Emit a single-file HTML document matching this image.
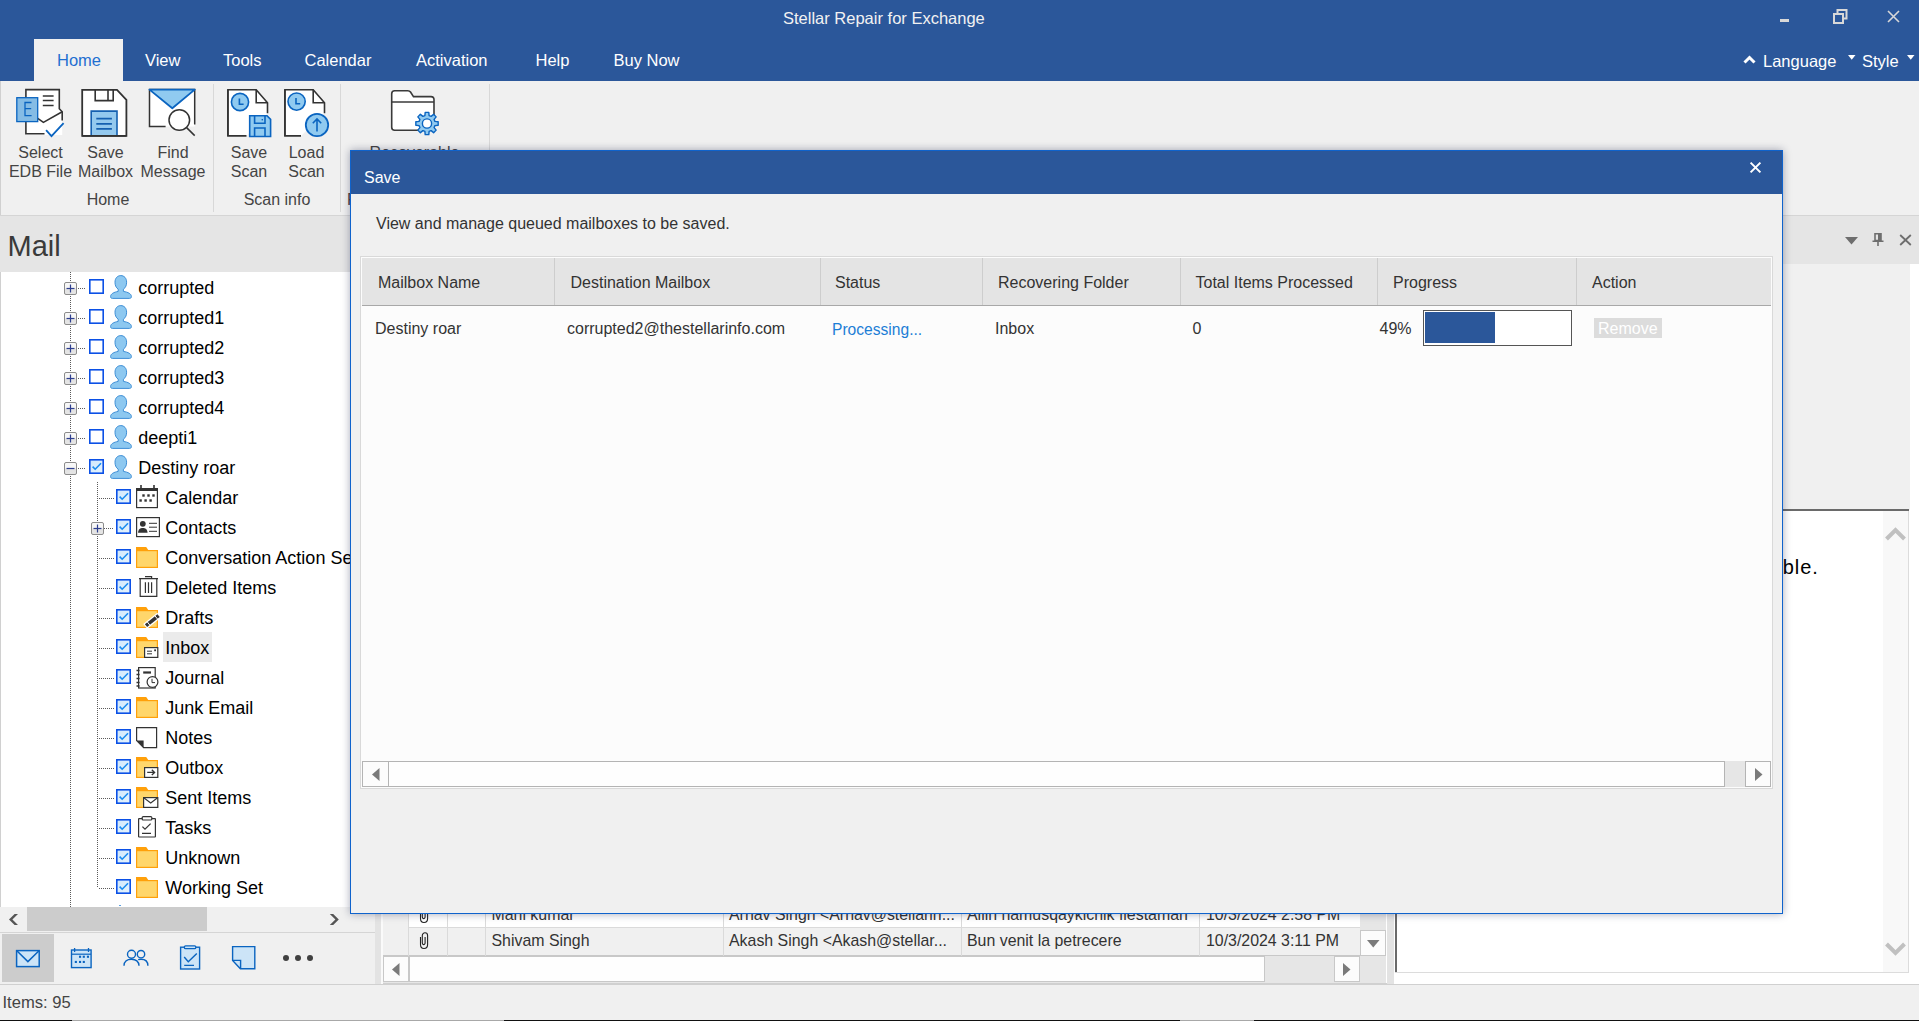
<!DOCTYPE html><html><head><meta charset="utf-8"><style>
html,body{margin:0;padding:0;}
body{width:1919px;height:1021px;position:relative;overflow:hidden;background:#F0F0F0;font-family:"Liberation Sans",sans-serif;}
.a{position:absolute;}
.t{position:absolute;white-space:pre;line-height:1;}
svg.a{overflow:visible;}
</style></head><body>
<svg width="0" height="0" style="position:absolute"><defs><linearGradient id="expg" x1="0" y1="0" x2="0" y2="1"><stop offset="0" stop-color="#FAFAFA"/><stop offset="0.45" stop-color="#F4F4F4"/><stop offset="0.55" stop-color="#E2E2E2"/><stop offset="1" stop-color="#E6E6E6"/></linearGradient><linearGradient id="cbg" x1="0" y1="0" x2="1" y2="1"><stop offset="0" stop-color="#CFE8FC"/><stop offset="1" stop-color="#E6F3FD"/></linearGradient></defs></svg>
<div class="a" style="left:0px;top:0px;width:1919px;height:81px;background:#2B579A"></div>
<div class="t" style="left:783.0px;top:10.0px;font-size:16.5px;color:#F2F2F2;">Stellar Repair for Exchange</div>
<div class="a" style="left:1780px;top:19px;width:9px;height:3px;background:#D8D8D8"></div>
<svg class="a" style="left:1833px;top:9px;" width="15" height="15" viewBox="0 0 15 15"><path d="M4.5 4.5V1h9v8.5H10" fill="none" stroke="#D8D8D8" stroke-width="2"/><rect x="1" y="5" width="9" height="9" fill="none" stroke="#D8D8D8" stroke-width="2"/></svg>
<svg class="a" style="left:1887px;top:10px;" width="13" height="13" viewBox="0 0 13 13"><path d="M1 1L12 12M12 1L1 12" stroke="#D8D8D8" stroke-width="1.6"/></svg>
<div class="a" style="left:34px;top:39px;width:89px;height:42px;background:#F0F0F0"></div>
<div class="t" style="left:57.0px;top:52.0px;font-size:16.5px;color:#1F6FD1;">Home</div>
<div class="t" style="left:145.0px;top:52.0px;font-size:16.5px;color:#FFFFFF;">View</div>
<div class="t" style="left:223.0px;top:52.0px;font-size:16.5px;color:#FFFFFF;">Tools</div>
<div class="t" style="left:304.5px;top:52.0px;font-size:16.5px;color:#FFFFFF;">Calendar</div>
<div class="t" style="left:416.0px;top:52.0px;font-size:16.5px;color:#FFFFFF;">Activation</div>
<div class="t" style="left:535.5px;top:52.0px;font-size:16.5px;color:#FFFFFF;">Help</div>
<div class="t" style="left:613.5px;top:52.0px;font-size:16.5px;color:#FFFFFF;">Buy Now</div>
<svg class="a" style="left:1743px;top:54px;" width="13" height="10" viewBox="0 0 13 10"><path d="M1.5 8.5L6.5 3.5L11.5 8.5" fill="none" stroke="#fff" stroke-width="3"/></svg>
<div class="t" style="left:1763.0px;top:53.0px;font-size:16.5px;color:#FFFFFF;">Language</div>
<svg class="a" style="left:1848px;top:55px;" width="8" height="5" viewBox="0 0 8 5"><path d="M0 0H7.5L3.75 4.8Z" fill="#fff"/></svg>
<div class="t" style="left:1862.0px;top:53.0px;font-size:16.5px;color:#FFFFFF;">Style</div>
<svg class="a" style="left:1907px;top:55px;" width="8" height="5" viewBox="0 0 8 5"><path d="M0 0H7.5L3.75 4.8Z" fill="#fff"/></svg>
<div class="a" style="left:0px;top:81px;width:1919px;height:134px;background:#F0F0F0"></div>
<div class="a" style="left:0px;top:81px;width:1px;height:134px;background:#D0D0D0"></div>
<div class="a" style="left:0px;top:215px;width:1919px;height:1px;background:#D5D5D5"></div>
<div class="a" style="left:213px;top:84px;width:1px;height:128px;background:#D8D8D8"></div>
<div class="a" style="left:340px;top:84px;width:1px;height:128px;background:#D8D8D8"></div>
<div class="a" style="left:489px;top:84px;width:1px;height:128px;background:#D8D8D8"></div>
<svg class="a" style="left:10px;top:85px;" width="60" height="55" viewBox="0 0 60 55"><path d="M15.9 4.6H49.3V23.7L52.2 26.7V50H15.9Z" fill="#fff"/><path d="M34.5 48.7H15.9V4.6H49.3V23.7L52.2 26.7V35.5" fill="none" stroke="#333" stroke-width="1.6"/><path d="M27.7 33.4L33.4 37.4L52.2 26.7" fill="none" stroke="#333" stroke-width="1.6"/><path d="M32.8 11H43.6M32.8 15.6H43.6M32.8 20.4H43.6" stroke="#333" stroke-width="1.5"/><rect x="6.8" y="12.7" width="20.9" height="23.9" fill="#85BCE5" stroke="#0A64C0" stroke-width="1.3"/><path d="M21.5 17.5H15V30.6H21.6M15 23.6H21.2" fill="none" stroke="#0A64C0" stroke-width="1.3"/><path d="M36.1 45.2L41.5 51.2L53.6 38.2" fill="none" stroke="#0A64C0" stroke-width="1.8"/></svg>
<svg class="a" style="left:75px;top:85px;" width="60" height="55" viewBox="0 0 60 55"><path d="M7.2 4.8H42L51.4 14.8V50.9H7.2Z" fill="#fff" stroke="#333" stroke-width="1.8"/><path d="M20.2 4.8V15.6H38.2V4.8M33 4.8V15.6" fill="none" stroke="#333" stroke-width="1.6"/><path d="M16.2 50.9V26.1H42V50.9" fill="#94C9EE" stroke="#1560B0" stroke-width="1.6"/><path d="M21.3 33.7H36.9M21.3 38.9H36.9M21.3 43.9H36.9" stroke="#1560B0" stroke-width="1.8"/><path d="M7.2 50.9H51.4" stroke="#333" stroke-width="1.8"/></svg>
<svg class="a" style="left:143px;top:85px;" width="60" height="55" viewBox="0 0 60 55"><path d="M6.5 4.6H51.7V39.6" fill="#fff"/><rect x="6.5" y="4.6" width="45.2" height="36.9" fill="#fff"/><path d="M22.6 41.5H6.5V4.6H51.7V39.6" fill="none" stroke="#333" stroke-width="1.5"/><path d="M6.5 4.6L29.3 23.2L51.7 4.6Z" fill="#90CAF0" stroke="#0A64C0" stroke-width="1.8" stroke-linejoin="round"/><circle cx="36.3" cy="35" r="10.3" fill="#fff" stroke="#333" stroke-width="1.5"/><path d="M43.6 42.6L51.7 50.6" stroke="#333" stroke-width="1.5"/></svg>
<svg class="a" style="left:222px;top:85px;" width="60" height="55" viewBox="0 0 60 55"><path d="M24.5 50.9H5.9V4.8H34.2L45.5 17.8V28.3" fill="#fff" stroke="#333" stroke-width="1.6"/><path d="M34.2 4.8V17.8H45.5" fill="none" stroke="#333" stroke-width="1.6"/><path d="M5.9 4.8V50.9" stroke="#333" stroke-width="1.6"/><circle cx="18" cy="17" r="8.6" fill="#90CAF0" stroke="#0A64C0" stroke-width="1.6"/><path d="M17.4 13.4V19.2H21.6" fill="none" stroke="#0A64C0" stroke-width="1.6"/><path d="M27.7 30.8H45L48.6 34.4V51.5H27.7Z" fill="#90CAF0" stroke="#0A64C0" stroke-width="1.6"/><path d="M32.6 31V38.3H43V31M32.6 51.3V43H43V51.3" fill="none" stroke="#0A64C0" stroke-width="1.6"/><rect x="39.6" y="34" width="1.4" height="1.4" fill="#0A64C0"/></svg>
<svg class="a" style="left:279px;top:85px;" width="60" height="55" viewBox="0 0 60 55"><path d="M22 50.9H5.9V4.8H34.2L45.5 17.8V28.3" fill="#fff" stroke="#333" stroke-width="1.6"/><path d="M34.2 4.8V17.8H45.5" fill="none" stroke="#333" stroke-width="1.6"/><path d="M5.9 4.8V50.9" stroke="#333" stroke-width="1.6"/><circle cx="17.6" cy="16.6" r="8.6" fill="#90CAF0" stroke="#0A64C0" stroke-width="1.6"/><path d="M17 13V18.8H21.2" fill="none" stroke="#0A64C0" stroke-width="1.6"/><circle cx="38" cy="40" r="11.2" fill="#90CAF0" stroke="#0A64C0" stroke-width="1.8"/><path d="M38 46.5V34M33.8 38.2L38 34L42.2 38.2" fill="none" stroke="#0A64C0" stroke-width="1.6"/></svg>
<svg class="a" style="left:385px;top:85px;" width="60" height="55" viewBox="0 0 60 55"><path d="M6.7 9V42.2Q6.7 45.2 9.7 45.2H45.8Q49 45.2 49 42.2V14.6Q49 11.6 46 11.6H28.5L25.5 7Q24.6 5.7 22.8 5.7H9.7Q6.7 5.7 6.7 8.7Z" fill="#fff" stroke="#3A3A3A" stroke-width="1.6"/><path d="M6.7 17H49" stroke="#3A3A3A" stroke-width="1.6"/><g transform="translate(42,38.5)"><path d="M-2.11 -7.92L-1.80 -11.16L1.80 -11.16L2.11 -7.92L4.11 -7.09L6.62 -9.16L9.16 -6.62L7.09 -4.11L7.92 -2.11L11.16 -1.80L11.16 1.80L7.92 2.11L7.09 4.11L9.16 6.62L6.62 9.16L4.11 7.09L2.11 7.92L1.80 11.16L-1.80 11.16L-2.11 7.92L-4.11 7.09L-6.62 9.16L-9.16 6.62L-7.09 4.11L-7.92 2.11L-11.16 1.80L-11.16 -1.80L-7.92 -2.11L-7.09 -4.11L-9.16 -6.62L-6.62 -9.16L-4.11 -7.09Z" fill="#90CAF0" stroke="#0A64C0" stroke-width="1.4" stroke-linejoin="round"/><circle r="4.6" fill="#fff" stroke="#0A64C0" stroke-width="1.4"/></g></svg>
<div class="t" style="left:-109.5px;width:300px;text-align:center;top:145.4px;font-size:16px;color:#444444">Select</div>
<div class="t" style="left:-109.5px;width:300px;text-align:center;top:164.4px;font-size:16px;color:#444444">EDB File</div>
<div class="t" style="left:-44.5px;width:300px;text-align:center;top:145.4px;font-size:16px;color:#444444">Save</div>
<div class="t" style="left:-44.5px;width:300px;text-align:center;top:164.4px;font-size:16px;color:#444444">Mailbox</div>
<div class="t" style="left:23px;width:300px;text-align:center;top:145.4px;font-size:16px;color:#444444">Find</div>
<div class="t" style="left:23px;width:300px;text-align:center;top:164.4px;font-size:16px;color:#444444">Message</div>
<div class="t" style="left:-42px;width:300px;text-align:center;top:192.4px;font-size:16px;color:#444444">Home</div>
<div class="t" style="left:99px;width:300px;text-align:center;top:145.4px;font-size:16px;color:#444444">Save</div>
<div class="t" style="left:99px;width:300px;text-align:center;top:164.4px;font-size:16px;color:#444444">Scan</div>
<div class="t" style="left:156.5px;width:300px;text-align:center;top:145.4px;font-size:16px;color:#444444">Load</div>
<div class="t" style="left:156.5px;width:300px;text-align:center;top:164.4px;font-size:16px;color:#444444">Scan</div>
<div class="t" style="left:127px;width:300px;text-align:center;top:192.4px;font-size:16px;color:#444444">Scan info</div>
<div class="t" style="left:264.5px;width:300px;text-align:center;top:145.4px;font-size:16px;color:#444444">Recoverable</div>
<div class="t" style="left:347.0px;top:192.4px;font-size:16px;color:#444444;">F</div>
<div class="a" style="left:0px;top:216px;width:380px;height:56px;background:#E5E5E5"></div>
<div class="t" style="left:7.5px;top:231.8px;font-size:29px;color:#3A3A3A;">Mail</div>
<div class="a" style="left:0px;top:272px;width:375px;height:635px;background:#FFFFFF"></div>
<div class="a" style="left:0px;top:272px;width:1px;height:635px;background:#D0D0D0"></div>
<div class="a" style="left:70px;top:272px;width:1px;height:635px;background:repeating-linear-gradient(to bottom,#5A5A5A 0,#5A5A5A 1px,transparent 1px,transparent 2px)"></div>
<svg class="a" style="left:64px;top:282px;" width="13" height="13" viewBox="0 0 13 13"><rect x="0.5" y="0.5" width="12" height="12" rx="1.5" fill="url(#expg)" stroke="#8C8C8C" stroke-width="1"/><path d="M2.5 6.5H10.5" stroke="#2E3F8F" stroke-width="1.2"/><path d="M6.5 2.5V10.5" stroke="#2E3F8F" stroke-width="1.2"/></svg>
<div class="a" style="left:78px;top:288px;width:8px;height:1px;background:repeating-linear-gradient(to right,#5A5A5A 0,#5A5A5A 1px,transparent 1px,transparent 2px)"></div>
<svg class="a" style="left:89px;top:279px;" width="15" height="15" viewBox="0 0 15 15"><rect x="0.8" y="0.8" width="13.4" height="13.4" fill="#FFFFFF" stroke="#0B50E6" stroke-width="1.6"/></svg>
<svg class="a" style="left:110px;top:275px;" width="22" height="24" viewBox="0 0 22 24"><path d="M8.2 14.2C5.8 12.6 5 10 5 7.2C5 3.2 7.4 0.6 10.8 0.6C14.2 0.6 16.6 3.2 16.6 7.2C16.6 10 15.8 12.6 13.4 14.2V16.4C18.2 17.2 21.4 18.8 21.4 21.6C21.4 23 20.6 23.4 19.4 23.4H2.6C1.2 23.4 0.6 23 0.6 21.6C0.6 18.8 3.8 17.2 8.2 16.4Z" fill="#8DC8F0" stroke="#3F8FD6" stroke-width="1"/></svg>
<div class="t" style="left:138.3px;top:278.9px;font-size:18px;color:#000;">corrupted</div>
<svg class="a" style="left:64px;top:312px;" width="13" height="13" viewBox="0 0 13 13"><rect x="0.5" y="0.5" width="12" height="12" rx="1.5" fill="url(#expg)" stroke="#8C8C8C" stroke-width="1"/><path d="M2.5 6.5H10.5" stroke="#2E3F8F" stroke-width="1.2"/><path d="M6.5 2.5V10.5" stroke="#2E3F8F" stroke-width="1.2"/></svg>
<div class="a" style="left:78px;top:318px;width:8px;height:1px;background:repeating-linear-gradient(to right,#5A5A5A 0,#5A5A5A 1px,transparent 1px,transparent 2px)"></div>
<svg class="a" style="left:89px;top:309px;" width="15" height="15" viewBox="0 0 15 15"><rect x="0.8" y="0.8" width="13.4" height="13.4" fill="#FFFFFF" stroke="#0B50E6" stroke-width="1.6"/></svg>
<svg class="a" style="left:110px;top:305px;" width="22" height="24" viewBox="0 0 22 24"><path d="M8.2 14.2C5.8 12.6 5 10 5 7.2C5 3.2 7.4 0.6 10.8 0.6C14.2 0.6 16.6 3.2 16.6 7.2C16.6 10 15.8 12.6 13.4 14.2V16.4C18.2 17.2 21.4 18.8 21.4 21.6C21.4 23 20.6 23.4 19.4 23.4H2.6C1.2 23.4 0.6 23 0.6 21.6C0.6 18.8 3.8 17.2 8.2 16.4Z" fill="#8DC8F0" stroke="#3F8FD6" stroke-width="1"/></svg>
<div class="t" style="left:138.3px;top:308.9px;font-size:18px;color:#000;">corrupted1</div>
<svg class="a" style="left:64px;top:342px;" width="13" height="13" viewBox="0 0 13 13"><rect x="0.5" y="0.5" width="12" height="12" rx="1.5" fill="url(#expg)" stroke="#8C8C8C" stroke-width="1"/><path d="M2.5 6.5H10.5" stroke="#2E3F8F" stroke-width="1.2"/><path d="M6.5 2.5V10.5" stroke="#2E3F8F" stroke-width="1.2"/></svg>
<div class="a" style="left:78px;top:348px;width:8px;height:1px;background:repeating-linear-gradient(to right,#5A5A5A 0,#5A5A5A 1px,transparent 1px,transparent 2px)"></div>
<svg class="a" style="left:89px;top:339px;" width="15" height="15" viewBox="0 0 15 15"><rect x="0.8" y="0.8" width="13.4" height="13.4" fill="#FFFFFF" stroke="#0B50E6" stroke-width="1.6"/></svg>
<svg class="a" style="left:110px;top:335px;" width="22" height="24" viewBox="0 0 22 24"><path d="M8.2 14.2C5.8 12.6 5 10 5 7.2C5 3.2 7.4 0.6 10.8 0.6C14.2 0.6 16.6 3.2 16.6 7.2C16.6 10 15.8 12.6 13.4 14.2V16.4C18.2 17.2 21.4 18.8 21.4 21.6C21.4 23 20.6 23.4 19.4 23.4H2.6C1.2 23.4 0.6 23 0.6 21.6C0.6 18.8 3.8 17.2 8.2 16.4Z" fill="#8DC8F0" stroke="#3F8FD6" stroke-width="1"/></svg>
<div class="t" style="left:138.3px;top:338.9px;font-size:18px;color:#000;">corrupted2</div>
<svg class="a" style="left:64px;top:372px;" width="13" height="13" viewBox="0 0 13 13"><rect x="0.5" y="0.5" width="12" height="12" rx="1.5" fill="url(#expg)" stroke="#8C8C8C" stroke-width="1"/><path d="M2.5 6.5H10.5" stroke="#2E3F8F" stroke-width="1.2"/><path d="M6.5 2.5V10.5" stroke="#2E3F8F" stroke-width="1.2"/></svg>
<div class="a" style="left:78px;top:378px;width:8px;height:1px;background:repeating-linear-gradient(to right,#5A5A5A 0,#5A5A5A 1px,transparent 1px,transparent 2px)"></div>
<svg class="a" style="left:89px;top:369px;" width="15" height="15" viewBox="0 0 15 15"><rect x="0.8" y="0.8" width="13.4" height="13.4" fill="#FFFFFF" stroke="#0B50E6" stroke-width="1.6"/></svg>
<svg class="a" style="left:110px;top:365px;" width="22" height="24" viewBox="0 0 22 24"><path d="M8.2 14.2C5.8 12.6 5 10 5 7.2C5 3.2 7.4 0.6 10.8 0.6C14.2 0.6 16.6 3.2 16.6 7.2C16.6 10 15.8 12.6 13.4 14.2V16.4C18.2 17.2 21.4 18.8 21.4 21.6C21.4 23 20.6 23.4 19.4 23.4H2.6C1.2 23.4 0.6 23 0.6 21.6C0.6 18.8 3.8 17.2 8.2 16.4Z" fill="#8DC8F0" stroke="#3F8FD6" stroke-width="1"/></svg>
<div class="t" style="left:138.3px;top:368.9px;font-size:18px;color:#000;">corrupted3</div>
<svg class="a" style="left:64px;top:402px;" width="13" height="13" viewBox="0 0 13 13"><rect x="0.5" y="0.5" width="12" height="12" rx="1.5" fill="url(#expg)" stroke="#8C8C8C" stroke-width="1"/><path d="M2.5 6.5H10.5" stroke="#2E3F8F" stroke-width="1.2"/><path d="M6.5 2.5V10.5" stroke="#2E3F8F" stroke-width="1.2"/></svg>
<div class="a" style="left:78px;top:408px;width:8px;height:1px;background:repeating-linear-gradient(to right,#5A5A5A 0,#5A5A5A 1px,transparent 1px,transparent 2px)"></div>
<svg class="a" style="left:89px;top:399px;" width="15" height="15" viewBox="0 0 15 15"><rect x="0.8" y="0.8" width="13.4" height="13.4" fill="#FFFFFF" stroke="#0B50E6" stroke-width="1.6"/></svg>
<svg class="a" style="left:110px;top:395px;" width="22" height="24" viewBox="0 0 22 24"><path d="M8.2 14.2C5.8 12.6 5 10 5 7.2C5 3.2 7.4 0.6 10.8 0.6C14.2 0.6 16.6 3.2 16.6 7.2C16.6 10 15.8 12.6 13.4 14.2V16.4C18.2 17.2 21.4 18.8 21.4 21.6C21.4 23 20.6 23.4 19.4 23.4H2.6C1.2 23.4 0.6 23 0.6 21.6C0.6 18.8 3.8 17.2 8.2 16.4Z" fill="#8DC8F0" stroke="#3F8FD6" stroke-width="1"/></svg>
<div class="t" style="left:138.3px;top:398.9px;font-size:18px;color:#000;">corrupted4</div>
<svg class="a" style="left:64px;top:432px;" width="13" height="13" viewBox="0 0 13 13"><rect x="0.5" y="0.5" width="12" height="12" rx="1.5" fill="url(#expg)" stroke="#8C8C8C" stroke-width="1"/><path d="M2.5 6.5H10.5" stroke="#2E3F8F" stroke-width="1.2"/><path d="M6.5 2.5V10.5" stroke="#2E3F8F" stroke-width="1.2"/></svg>
<div class="a" style="left:78px;top:438px;width:8px;height:1px;background:repeating-linear-gradient(to right,#5A5A5A 0,#5A5A5A 1px,transparent 1px,transparent 2px)"></div>
<svg class="a" style="left:89px;top:429px;" width="15" height="15" viewBox="0 0 15 15"><rect x="0.8" y="0.8" width="13.4" height="13.4" fill="#FFFFFF" stroke="#0B50E6" stroke-width="1.6"/></svg>
<svg class="a" style="left:110px;top:425px;" width="22" height="24" viewBox="0 0 22 24"><path d="M8.2 14.2C5.8 12.6 5 10 5 7.2C5 3.2 7.4 0.6 10.8 0.6C14.2 0.6 16.6 3.2 16.6 7.2C16.6 10 15.8 12.6 13.4 14.2V16.4C18.2 17.2 21.4 18.8 21.4 21.6C21.4 23 20.6 23.4 19.4 23.4H2.6C1.2 23.4 0.6 23 0.6 21.6C0.6 18.8 3.8 17.2 8.2 16.4Z" fill="#8DC8F0" stroke="#3F8FD6" stroke-width="1"/></svg>
<div class="t" style="left:138.3px;top:428.9px;font-size:18px;color:#000;">deepti1</div>
<svg class="a" style="left:64px;top:462px;" width="13" height="13" viewBox="0 0 13 13"><rect x="0.5" y="0.5" width="12" height="12" rx="1.5" fill="url(#expg)" stroke="#8C8C8C" stroke-width="1"/><path d="M2.5 6.5H10.5" stroke="#2E3F8F" stroke-width="1.2"/></svg>
<div class="a" style="left:78px;top:468px;width:8px;height:1px;background:repeating-linear-gradient(to right,#5A5A5A 0,#5A5A5A 1px,transparent 1px,transparent 2px)"></div>
<svg class="a" style="left:89px;top:459px;" width="15" height="15" viewBox="0 0 15 15"><rect x="0.8" y="0.8" width="13.4" height="13.4" fill="url(#cbg)" stroke="#0B50E6" stroke-width="1.6"/><path d="M3.6 7.6L6.2 10.2L12 4.3" fill="none" stroke="#1A8CF0" stroke-width="1.6"/></svg>
<svg class="a" style="left:110px;top:455px;" width="22" height="24" viewBox="0 0 22 24"><path d="M8.2 14.2C5.8 12.6 5 10 5 7.2C5 3.2 7.4 0.6 10.8 0.6C14.2 0.6 16.6 3.2 16.6 7.2C16.6 10 15.8 12.6 13.4 14.2V16.4C18.2 17.2 21.4 18.8 21.4 21.6C21.4 23 20.6 23.4 19.4 23.4H2.6C1.2 23.4 0.6 23 0.6 21.6C0.6 18.8 3.8 17.2 8.2 16.4Z" fill="#8DC8F0" stroke="#3F8FD6" stroke-width="1"/></svg>
<div class="t" style="left:138.3px;top:458.9px;font-size:18px;color:#000;">Destiny roar</div>
<div class="a" style="left:97px;top:482px;width:1px;height:406px;background:repeating-linear-gradient(to bottom,#5A5A5A 0,#5A5A5A 1px,transparent 1px,transparent 2px)"></div>
<div class="a" style="left:119px;top:905px;width:2px;height:1px;background:#5A9FE0"></div>
<div class="a" style="left:163px;top:632px;width:49px;height:30px;background:#EBEBEB"></div>
<div class="a" style="left:99px;top:498px;width:15px;height:1px;background:repeating-linear-gradient(to right,#5A5A5A 0,#5A5A5A 1px,transparent 1px,transparent 2px)"></div>
<svg class="a" style="left:116px;top:489px;" width="15" height="15" viewBox="0 0 15 15"><rect x="0.8" y="0.8" width="13.4" height="13.4" fill="url(#cbg)" stroke="#0B50E6" stroke-width="1.6"/><path d="M3.6 7.6L6.2 10.2L12 4.3" fill="none" stroke="#1A8CF0" stroke-width="1.6"/></svg>
<svg class="a" style="left:136px;top:485px;" width="22" height="23" viewBox="0 0 22 23"><rect x="0.6" y="3.6" width="20.8" height="19" fill="#fff" stroke="#333" stroke-width="1.2"/><rect x="0" y="3" width="22" height="3" fill="#333"/><rect x="4.2" y="0" width="1.6" height="4" fill="#333"/><rect x="17.2" y="0" width="1.6" height="4" fill="#333"/><rect x="6.3" y="9.3" width="2.4" height="2.4" fill="#333"/><rect x="11.3" y="9.3" width="2.4" height="2.4" fill="#333"/><rect x="16.3" y="9.3" width="2.4" height="2.4" fill="#333"/><rect x="3.4" y="14.3" width="2.4" height="2.4" fill="#333"/><rect x="8.4" y="14.3" width="2.4" height="2.4" fill="#333"/><rect x="13.4" y="14.3" width="2.4" height="2.4" fill="#333"/></svg>
<div class="t" style="left:165.3px;top:488.9px;font-size:18px;color:#000;">Calendar</div>
<svg class="a" style="left:91px;top:522px;" width="13" height="13" viewBox="0 0 13 13"><rect x="0.5" y="0.5" width="12" height="12" rx="1.5" fill="url(#expg)" stroke="#8C8C8C" stroke-width="1"/><path d="M2.5 6.5H10.5" stroke="#2E3F8F" stroke-width="1.2"/><path d="M6.5 2.5V10.5" stroke="#2E3F8F" stroke-width="1.2"/></svg>
<div class="a" style="left:104px;top:528px;width:10px;height:1px;background:repeating-linear-gradient(to right,#5A5A5A 0,#5A5A5A 1px,transparent 1px,transparent 2px)"></div>
<svg class="a" style="left:116px;top:519px;" width="15" height="15" viewBox="0 0 15 15"><rect x="0.8" y="0.8" width="13.4" height="13.4" fill="url(#cbg)" stroke="#0B50E6" stroke-width="1.6"/><path d="M3.6 7.6L6.2 10.2L12 4.3" fill="none" stroke="#1A8CF0" stroke-width="1.6"/></svg>
<svg class="a" style="left:136px;top:517px;" width="24" height="20" viewBox="0 0 24 20"><rect x="0.6" y="0.6" width="22.8" height="19" fill="#fff" stroke="#333" stroke-width="1.2"/><circle cx="6.8" cy="6.8" r="2.9" fill="#333"/><path d="M2 15.8C2.4 12 4.2 11 6.8 11C9.4 11 11.2 12 11.6 15.8Z" fill="#333"/><path d="M13 6.3H21M13 10.2H21M13 14.3H21" stroke="#333" stroke-width="1"/></svg>
<div class="t" style="left:165.3px;top:518.9px;font-size:18px;color:#000;">Contacts</div>
<div class="a" style="left:99px;top:558px;width:15px;height:1px;background:repeating-linear-gradient(to right,#5A5A5A 0,#5A5A5A 1px,transparent 1px,transparent 2px)"></div>
<svg class="a" style="left:116px;top:549px;" width="15" height="15" viewBox="0 0 15 15"><rect x="0.8" y="0.8" width="13.4" height="13.4" fill="url(#cbg)" stroke="#0B50E6" stroke-width="1.6"/><path d="M3.6 7.6L6.2 10.2L12 4.3" fill="none" stroke="#1A8CF0" stroke-width="1.6"/></svg>
<svg class="a" style="left:136px;top:547px;" width="22" height="21" viewBox="0 0 22 21"><path d="M0 0H10.2L12.6 3.6H0Z" fill="#FFA00A"/><rect x="0.6" y="3.6" width="20.8" height="16.8" fill="#FFD66B" stroke="#FFA00A" stroke-width="1.2"/></svg>
<div class="t" style="left:165.3px;top:548.9px;font-size:18px;color:#000;">Conversation Action Settings</div>
<div class="a" style="left:99px;top:588px;width:15px;height:1px;background:repeating-linear-gradient(to right,#5A5A5A 0,#5A5A5A 1px,transparent 1px,transparent 2px)"></div>
<svg class="a" style="left:116px;top:579px;" width="15" height="15" viewBox="0 0 15 15"><rect x="0.8" y="0.8" width="13.4" height="13.4" fill="url(#cbg)" stroke="#0B50E6" stroke-width="1.6"/><path d="M3.6 7.6L6.2 10.2L12 4.3" fill="none" stroke="#1A8CF0" stroke-width="1.6"/></svg>
<svg class="a" style="left:137px;top:576px;" width="22" height="22" viewBox="0 0 22 22"><path d="M2 2.6H21M3.2 2.6V20.4H19.8V2.6M8 0.6H14.6V2.6M8.4 6.2V17M11.5 6.2V17M14.6 6.2V17" fill="none" stroke="#333" stroke-width="1.2"/></svg>
<div class="t" style="left:165.3px;top:578.9px;font-size:18px;color:#000;">Deleted Items</div>
<div class="a" style="left:99px;top:618px;width:15px;height:1px;background:repeating-linear-gradient(to right,#5A5A5A 0,#5A5A5A 1px,transparent 1px,transparent 2px)"></div>
<svg class="a" style="left:116px;top:609px;" width="15" height="15" viewBox="0 0 15 15"><rect x="0.8" y="0.8" width="13.4" height="13.4" fill="url(#cbg)" stroke="#0B50E6" stroke-width="1.6"/><path d="M3.6 7.6L6.2 10.2L12 4.3" fill="none" stroke="#1A8CF0" stroke-width="1.6"/></svg>
<svg class="a" style="left:136px;top:607px;" width="22" height="21" viewBox="0 0 22 21"><path d="M0 0H10.2L12.6 3.6H0Z" fill="#FFA00A"/><rect x="0.6" y="3.6" width="20.8" height="16.8" fill="#FFD66B" stroke="#FFA00A" stroke-width="1.2"/><path d="M9.2 19.4L23.2 8.2" stroke="#fff" stroke-width="6.2"/><path d="M10 18.7L22.6 8.6" stroke="#333" stroke-width="3.6"/><path d="M11.3 14.9L13.9 18.2M18.9 8.8L21.5 12" stroke="#fff" stroke-width="1"/></svg>
<div class="t" style="left:165.3px;top:608.9px;font-size:18px;color:#000;">Drafts</div>
<div class="a" style="left:99px;top:648px;width:15px;height:1px;background:repeating-linear-gradient(to right,#5A5A5A 0,#5A5A5A 1px,transparent 1px,transparent 2px)"></div>
<svg class="a" style="left:116px;top:639px;" width="15" height="15" viewBox="0 0 15 15"><rect x="0.8" y="0.8" width="13.4" height="13.4" fill="url(#cbg)" stroke="#0B50E6" stroke-width="1.6"/><path d="M3.6 7.6L6.2 10.2L12 4.3" fill="none" stroke="#1A8CF0" stroke-width="1.6"/></svg>
<svg class="a" style="left:136px;top:637px;" width="22" height="21" viewBox="0 0 22 21"><path d="M0 0H10.2L12.6 3.6H0Z" fill="#FFA00A"/><rect x="0.6" y="3.6" width="20.8" height="16.8" fill="#FFD66B" stroke="#FFA00A" stroke-width="1.2"/><rect x="8.6" y="10.6" width="13.2" height="9.8" fill="#fff" stroke="#333" stroke-width="1.2"/><path d="M11 14.2H16M11 16.8H16" stroke="#333" stroke-width="1"/><rect x="18.2" y="12.4" width="1.8" height="1.8" fill="#333"/></svg>
<div class="t" style="left:165.3px;top:638.9px;font-size:18px;color:#000;">Inbox</div>
<div class="a" style="left:99px;top:678px;width:15px;height:1px;background:repeating-linear-gradient(to right,#5A5A5A 0,#5A5A5A 1px,transparent 1px,transparent 2px)"></div>
<svg class="a" style="left:116px;top:669px;" width="15" height="15" viewBox="0 0 15 15"><rect x="0.8" y="0.8" width="13.4" height="13.4" fill="url(#cbg)" stroke="#0B50E6" stroke-width="1.6"/><path d="M3.6 7.6L6.2 10.2L12 4.3" fill="none" stroke="#1A8CF0" stroke-width="1.6"/></svg>
<svg class="a" style="left:136px;top:667px;" width="22" height="22" viewBox="0 0 22 22"><rect x="2.6" y="0.6" width="16.6" height="20.4" fill="#fff" stroke="#333" stroke-width="1.2"/><path d="M0.5 3.5H3.6M0.5 7.5H3.6M0.5 11.5H3.6M0.5 15.5H3.6M0.5 19H3.6" stroke="#333" stroke-width="1.4"/><rect x="7.2" y="4.4" width="7.8" height="2.2" fill="#333"/><circle cx="16.5" cy="15" r="5.4" fill="#fff" stroke="#333" stroke-width="1.2"/><path d="M16 11.8V15.6H19" fill="none" stroke="#333" stroke-width="1"/></svg>
<div class="t" style="left:165.3px;top:668.9px;font-size:18px;color:#000;">Journal</div>
<div class="a" style="left:99px;top:708px;width:15px;height:1px;background:repeating-linear-gradient(to right,#5A5A5A 0,#5A5A5A 1px,transparent 1px,transparent 2px)"></div>
<svg class="a" style="left:116px;top:699px;" width="15" height="15" viewBox="0 0 15 15"><rect x="0.8" y="0.8" width="13.4" height="13.4" fill="url(#cbg)" stroke="#0B50E6" stroke-width="1.6"/><path d="M3.6 7.6L6.2 10.2L12 4.3" fill="none" stroke="#1A8CF0" stroke-width="1.6"/></svg>
<svg class="a" style="left:136px;top:697px;" width="22" height="21" viewBox="0 0 22 21"><path d="M0 0H10.2L12.6 3.6H0Z" fill="#FFA00A"/><rect x="0.6" y="3.6" width="20.8" height="16.8" fill="#FFD66B" stroke="#FFA00A" stroke-width="1.2"/></svg>
<div class="t" style="left:165.3px;top:698.9px;font-size:18px;color:#000;">Junk Email</div>
<div class="a" style="left:99px;top:738px;width:15px;height:1px;background:repeating-linear-gradient(to right,#5A5A5A 0,#5A5A5A 1px,transparent 1px,transparent 2px)"></div>
<svg class="a" style="left:116px;top:729px;" width="15" height="15" viewBox="0 0 15 15"><rect x="0.8" y="0.8" width="13.4" height="13.4" fill="url(#cbg)" stroke="#0B50E6" stroke-width="1.6"/><path d="M3.6 7.6L6.2 10.2L12 4.3" fill="none" stroke="#1A8CF0" stroke-width="1.6"/></svg>
<svg class="a" style="left:136px;top:727px;" width="22" height="22" viewBox="0 0 22 22"><path d="M0.6 0.6H20.6V20.6H7.6L0.6 13.6Z" fill="#fff" stroke="#333" stroke-width="1.2"/><path d="M0.6 13.6H7.6V20.6Z" fill="#333"/></svg>
<div class="t" style="left:165.3px;top:728.9px;font-size:18px;color:#000;">Notes</div>
<div class="a" style="left:99px;top:768px;width:15px;height:1px;background:repeating-linear-gradient(to right,#5A5A5A 0,#5A5A5A 1px,transparent 1px,transparent 2px)"></div>
<svg class="a" style="left:116px;top:759px;" width="15" height="15" viewBox="0 0 15 15"><rect x="0.8" y="0.8" width="13.4" height="13.4" fill="url(#cbg)" stroke="#0B50E6" stroke-width="1.6"/><path d="M3.6 7.6L6.2 10.2L12 4.3" fill="none" stroke="#1A8CF0" stroke-width="1.6"/></svg>
<svg class="a" style="left:136px;top:757px;" width="22" height="21" viewBox="0 0 22 21"><path d="M0 0H10.2L12.6 3.6H0Z" fill="#FFA00A"/><rect x="0.6" y="3.6" width="20.8" height="16.8" fill="#FFD66B" stroke="#FFA00A" stroke-width="1.2"/><rect x="8.6" y="10.6" width="13.2" height="9.8" fill="#fff" stroke="#333" stroke-width="1.2"/><path d="M11.2 15.4H18.6M15.8 12.8L18.6 15.4L15.8 18" fill="none" stroke="#333" stroke-width="1.3"/></svg>
<div class="t" style="left:165.3px;top:758.9px;font-size:18px;color:#000;">Outbox</div>
<div class="a" style="left:99px;top:798px;width:15px;height:1px;background:repeating-linear-gradient(to right,#5A5A5A 0,#5A5A5A 1px,transparent 1px,transparent 2px)"></div>
<svg class="a" style="left:116px;top:789px;" width="15" height="15" viewBox="0 0 15 15"><rect x="0.8" y="0.8" width="13.4" height="13.4" fill="url(#cbg)" stroke="#0B50E6" stroke-width="1.6"/><path d="M3.6 7.6L6.2 10.2L12 4.3" fill="none" stroke="#1A8CF0" stroke-width="1.6"/></svg>
<svg class="a" style="left:136px;top:787px;" width="22" height="21" viewBox="0 0 22 21"><path d="M0 0H10.2L12.6 3.6H0Z" fill="#FFA00A"/><rect x="0.6" y="3.6" width="20.8" height="16.8" fill="#FFD66B" stroke="#FFA00A" stroke-width="1.2"/><rect x="7.6" y="10.6" width="14.2" height="9.8" fill="#fff" stroke="#333" stroke-width="1.2"/><path d="M7.8 10.8L14.7 16L21.6 10.8" fill="none" stroke="#333" stroke-width="1.1"/></svg>
<div class="t" style="left:165.3px;top:788.9px;font-size:18px;color:#000;">Sent Items</div>
<div class="a" style="left:99px;top:828px;width:15px;height:1px;background:repeating-linear-gradient(to right,#5A5A5A 0,#5A5A5A 1px,transparent 1px,transparent 2px)"></div>
<svg class="a" style="left:116px;top:819px;" width="15" height="15" viewBox="0 0 15 15"><rect x="0.8" y="0.8" width="13.4" height="13.4" fill="url(#cbg)" stroke="#0B50E6" stroke-width="1.6"/><path d="M3.6 7.6L6.2 10.2L12 4.3" fill="none" stroke="#1A8CF0" stroke-width="1.6"/></svg>
<svg class="a" style="left:136px;top:816px;" width="22" height="22" viewBox="0 0 22 22"><rect x="2.6" y="2.6" width="16.8" height="18.4" rx="0.5" fill="#fff" stroke="#333" stroke-width="1.2"/><rect x="6.2" y="0.6" width="9.6" height="3.4" rx="1" fill="#fff" stroke="#333" stroke-width="1.2"/><path d="M6.4 10.6L9 13.2L14.6 7.6M6 17.4H15" fill="none" stroke="#333" stroke-width="1.2"/></svg>
<div class="t" style="left:165.3px;top:818.9px;font-size:18px;color:#000;">Tasks</div>
<div class="a" style="left:99px;top:858px;width:15px;height:1px;background:repeating-linear-gradient(to right,#5A5A5A 0,#5A5A5A 1px,transparent 1px,transparent 2px)"></div>
<svg class="a" style="left:116px;top:849px;" width="15" height="15" viewBox="0 0 15 15"><rect x="0.8" y="0.8" width="13.4" height="13.4" fill="url(#cbg)" stroke="#0B50E6" stroke-width="1.6"/><path d="M3.6 7.6L6.2 10.2L12 4.3" fill="none" stroke="#1A8CF0" stroke-width="1.6"/></svg>
<svg class="a" style="left:136px;top:847px;" width="22" height="21" viewBox="0 0 22 21"><path d="M0 0H10.2L12.6 3.6H0Z" fill="#FFA00A"/><rect x="0.6" y="3.6" width="20.8" height="16.8" fill="#FFD66B" stroke="#FFA00A" stroke-width="1.2"/></svg>
<div class="t" style="left:165.3px;top:848.9px;font-size:18px;color:#000;">Unknown</div>
<div class="a" style="left:99px;top:888px;width:15px;height:1px;background:repeating-linear-gradient(to right,#5A5A5A 0,#5A5A5A 1px,transparent 1px,transparent 2px)"></div>
<svg class="a" style="left:116px;top:879px;" width="15" height="15" viewBox="0 0 15 15"><rect x="0.8" y="0.8" width="13.4" height="13.4" fill="url(#cbg)" stroke="#0B50E6" stroke-width="1.6"/><path d="M3.6 7.6L6.2 10.2L12 4.3" fill="none" stroke="#1A8CF0" stroke-width="1.6"/></svg>
<svg class="a" style="left:136px;top:877px;" width="22" height="21" viewBox="0 0 22 21"><path d="M0 0H10.2L12.6 3.6H0Z" fill="#FFA00A"/><rect x="0.6" y="3.6" width="20.8" height="16.8" fill="#FFD66B" stroke="#FFA00A" stroke-width="1.2"/></svg>
<div class="t" style="left:165.3px;top:878.9px;font-size:18px;color:#000;">Working Set</div>
<div class="a" style="left:0px;top:907px;width:375px;height:25px;background:#F0F0F0"></div>
<svg class="a" style="left:8px;top:913px;" width="11" height="13" viewBox="0 0 11 13"><path d="M10 1H6.6L1 6.5L6.6 12H10L4.4 6.5Z" fill="#555"/></svg>
<svg class="a" style="left:329px;top:913px;" width="11" height="13" viewBox="0 0 11 13"><path d="M0.8 1H4.2L9.8 6.5L4.2 12H0.8L6.4 6.5Z" fill="#555"/></svg>
<div class="a" style="left:27px;top:907px;width:180px;height:24px;background:#CCCCCC"></div>
<div class="a" style="left:0px;top:932px;width:375px;height:1px;background:#D5D5D5"></div>
<div class="a" style="left:0px;top:933px;width:375px;height:51px;background:#F0F0F0"></div>
<div class="a" style="left:2px;top:934px;width:52px;height:48px;background:#CCCCCC"></div>
<svg class="a" style="left:15px;top:949px;" width="26" height="20" viewBox="0 0 26 20"><rect x="1.6" y="1.6" width="22.6" height="16" fill="#CCE4F7" stroke="#0A64C0" stroke-width="1.5"/><path d="M1.8 1.8L12.9 12.6L24 1.8" fill="none" stroke="#0A64C0" stroke-width="1.5"/></svg>
<svg class="a" style="left:70px;top:947px;" width="24" height="23" viewBox="0 0 24 23"><rect x="1.5" y="3" width="19.6" height="17.6" fill="#CCE4F7" stroke="#0A64C0" stroke-width="1.4"/><path d="M1.5 7.2H21" stroke="#0A64C0" stroke-width="1.2"/><path d="M4.6 1V5M18.5 1V5" stroke="#0A64C0" stroke-width="1.3"/><rect x="9" y="8.7" width="2.1" height="2.1" fill="#0A64C0"/><rect x="12.75" y="8.7" width="2.1" height="2.1" fill="#0A64C0"/><rect x="16.9" y="8.7" width="2.1" height="2.1" fill="#0A64C0"/><rect x="4.8" y="13.9" width="2.1" height="2.1" fill="#0A64C0"/><rect x="9" y="13.9" width="2.1" height="2.1" fill="#0A64C0"/><rect x="12.75" y="13.9" width="2.1" height="2.1" fill="#0A64C0"/></svg>
<svg class="a" style="left:123px;top:948px;" width="27" height="21" viewBox="0 0 27 21"><circle cx="8.5" cy="6.2" r="4" fill="none" stroke="#0A64C0" stroke-width="1.4"/><path d="M1 17.8C1 13.5 4.2 11.2 8.5 11.2C12.8 11.2 16 13.5 16 17.8" fill="none" stroke="#0A64C0" stroke-width="1.4"/><circle cx="18" cy="6.2" r="3.7" fill="none" stroke="#0A64C0" stroke-width="1.4"/><path d="M15.2 11.6C16 11.3 17 11.2 18 11.2C22 11.2 24.9 13.5 24.9 17.8" fill="none" stroke="#0A64C0" stroke-width="1.4"/></svg>
<svg class="a" style="left:179px;top:945px;" width="23" height="25" viewBox="0 0 23 25"><rect x="1.6" y="2.2" width="19" height="21.8" fill="#CCE4F7" stroke="#0A64C0" stroke-width="1.4"/><rect x="5.4" y="0.8" width="11.4" height="2.8" rx="1.2" fill="#CCE4F7" stroke="#0A64C0" stroke-width="1.3"/><path d="M5.2 12L9.3 16.8L17.8 8.4M5.2 20.4H15" fill="none" stroke="#0A64C0" stroke-width="1.4"/></svg>
<svg class="a" style="left:231px;top:945px;" width="25" height="25" viewBox="0 0 25 25"><path d="M1.6 1.6H23.8V23.8H9.4L1.6 15.4Z" fill="#CCE4F7" stroke="#0A64C0" stroke-width="1.4"/><path d="M1.6 15.4H9.6V23.8" fill="none" stroke="#0A64C0" stroke-width="1.4"/></svg>
<div class="a" style="left:283px;top:955px;width:6px;height:6px;background:#404040;border-radius:50%"></div>
<div class="a" style="left:295px;top:955px;width:6px;height:6px;background:#404040;border-radius:50%"></div>
<div class="a" style="left:307px;top:955px;width:6px;height:6px;background:#404040;border-radius:50%"></div>
<div class="a" style="left:0px;top:984px;width:1919px;height:1px;background:#D0D0D0"></div>
<div class="a" style="left:0px;top:985px;width:1919px;height:36px;background:#F0F0F0"></div>
<div class="t" style="left:2.5px;top:995.1px;font-size:16.6px;color:#444444;">Items: 95</div>
<div class="a" style="left:0px;top:1020px;width:1919px;height:1px;background:#A8A8A8"></div>
<div class="a" style="left:0px;top:1020px;width:72px;height:1px;background:#111"></div>
<div class="a" style="left:504px;top:1020px;width:676px;height:1px;background:#111"></div>
<div class="a" style="left:1254px;top:1020px;width:665px;height:1px;background:#111"></div>
<div class="a" style="left:375px;top:216px;width:8px;height:768px;background:#E3E3E3"></div>
<div class="a" style="left:381px;top:216px;width:2px;height:768px;background:#FAFAFA"></div>
<div class="a" style="left:383px;top:216px;width:1004px;height:768px;background:#FFFFFF"></div>
<div class="a" style="left:383px;top:900px;width:977px;height:27px;background:#FFFFFF"></div>
<div class="a" style="left:383px;top:927px;width:977px;height:1px;background:#DADADA"></div>
<div class="a" style="left:409px;top:928px;width:951px;height:27px;background:#F0F0F0"></div>
<div class="a" style="left:383px;top:900px;width:26px;height:56px;background:#F0F0F0"></div>
<div class="a" style="left:383px;top:955px;width:977px;height:1px;background:#C8C8C8"></div>
<div class="a" style="left:408px;top:900px;width:1px;height:56px;background:#DADADA"></div>
<div class="a" style="left:447px;top:900px;width:1px;height:56px;background:#DADADA"></div>
<div class="a" style="left:485px;top:900px;width:1px;height:56px;background:#DADADA"></div>
<div class="a" style="left:723px;top:900px;width:1px;height:56px;background:#DADADA"></div>
<div class="a" style="left:961px;top:900px;width:1px;height:56px;background:#DADADA"></div>
<div class="a" style="left:1199px;top:900px;width:1px;height:56px;background:#DADADA"></div>
<svg class="a" style="left:419px;top:906px;" width="10" height="18" viewBox="0 0 10 18"><path d="M1.5 5V12.5C1.5 15 3 16.5 5 16.5C7 16.5 8.6 15 8.6 12.5V3.6C8.6 1.8 7.5 0.8 6 0.8C4.5 0.8 3.3 1.8 3.3 3.6V11C3.3 12 3.8 12.6 4.6 12.6C5.4 12.6 6.1 12 6.1 11V5" fill="none" stroke="#222" stroke-width="1.1"/></svg>
<svg class="a" style="left:419px;top:932px;" width="10" height="18" viewBox="0 0 10 18"><path d="M1.5 5V12.5C1.5 15 3 16.5 5 16.5C7 16.5 8.6 15 8.6 12.5V3.6C8.6 1.8 7.5 0.8 6 0.8C4.5 0.8 3.3 1.8 3.3 3.6V11C3.3 12 3.8 12.6 4.6 12.6C5.4 12.6 6.1 12 6.1 11V5" fill="none" stroke="#222" stroke-width="1.1"/></svg>
<div class="t" style="left:491.5px;top:907.0px;font-size:15.9px;color:#333333;">Mani kumar</div>
<div class="t" style="left:729.0px;top:907.0px;font-size:15.9px;color:#333333;">Arnav Singh &lt;Arnav@stellarin...</div>
<div class="t" style="left:967.0px;top:907.0px;font-size:15.9px;color:#333333;">Aliin namusqaykichik fiestaman</div>
<div class="t" style="left:1206.0px;top:907.0px;font-size:15.9px;color:#333333;">10/3/2024 2:58 PM</div>
<div class="t" style="left:491.5px;top:933.0px;font-size:15.9px;color:#333333;">Shivam Singh</div>
<div class="t" style="left:729.0px;top:933.0px;font-size:15.9px;color:#333333;">Akash Singh &lt;Akash@stellar...</div>
<div class="t" style="left:967.0px;top:933.0px;font-size:15.9px;color:#333333;">Bun venit la petrecere</div>
<div class="t" style="left:1206.0px;top:933.0px;font-size:15.9px;color:#333333;">10/3/2024 3:11 PM</div>
<div class="a" style="left:1360px;top:900px;width:26px;height:84px;background:#E6E6E6"></div>
<div class="a" style="left:1360px;top:930px;width:26px;height:26px;background:#C8C8C8"></div>
<div class="a" style="left:1361px;top:931px;width:24px;height:24px;background:#FCFCFC"></div>
<svg class="a" style="left:1367px;top:940px;" width="13" height="8" viewBox="0 0 13 8"><path d="M0 0H12.5L6.25 7.5Z" fill="#7A7A7A"/></svg>
<div class="a" style="left:383px;top:956px;width:977px;height:27px;background:#E6E6E6"></div>
<div class="a" style="left:383px;top:956px;width:26px;height:26px;background:#C8C8C8"></div>
<div class="a" style="left:384px;top:957px;width:24px;height:24px;background:#FCFCFC"></div>
<svg class="a" style="left:392px;top:963px;" width="8" height="13" viewBox="0 0 8 13"><path d="M7.5 0L0 6.5L7.5 13Z" fill="#7A7A7A"/></svg>
<div class="a" style="left:409px;top:956px;width:856px;height:26px;background:#C8C8C8"></div>
<div class="a" style="left:410px;top:957px;width:854px;height:24px;background:#FEFEFE"></div>
<div class="a" style="left:1334px;top:956px;width:26px;height:26px;background:#C8C8C8"></div>
<div class="a" style="left:1335px;top:957px;width:24px;height:24px;background:#FCFCFC"></div>
<svg class="a" style="left:1343px;top:963px;" width="8" height="13" viewBox="0 0 8 13"><path d="M0 0L7.5 6.5L0 13Z" fill="#7A7A7A"/></svg>
<div class="a" style="left:383px;top:983px;width:1004px;height:1px;background:#D0D0D0"></div>
<div class="a" style="left:1387px;top:216px;width:7px;height:768px;background:#E3E3E3"></div>
<div class="a" style="left:1394px;top:215px;width:525px;height:1px;background:#D5D5D5"></div>
<div class="a" style="left:1394px;top:216px;width:525px;height:48px;background:#E5E5E5"></div>
<div class="a" style="left:1394px;top:264px;width:525px;height:720px;background:#FFFFFF"></div>
<div class="a" style="left:1394px;top:264px;width:516px;height:246px;background:#F0F0F0"></div>
<svg class="a" style="left:1845px;top:237px;" width="13" height="8" viewBox="0 0 13 8"><path d="M0 0H13L6.5 7.6Z" fill="#6E6E6E"/></svg>
<svg class="a" style="left:1872px;top:233px;" width="12" height="13" viewBox="0 0 12 13"><path d="M3 0.8H9V7.5H3Z" fill="none" stroke="#6E6E6E" stroke-width="1.6"/><path d="M0.5 8.2H11.5M6 8V13" stroke="#6E6E6E" stroke-width="1.6"/><rect x="6" y="0.8" width="3" height="7" fill="#6E6E6E"/></svg>
<svg class="a" style="left:1899px;top:234px;" width="13" height="12" viewBox="0 0 13 12"><path d="M1.2 1L11.8 11M11.8 1L1.2 11" stroke="#6E6E6E" stroke-width="1.8"/></svg>
<div class="a" style="left:1395px;top:509px;width:514px;height:2px;background:#6A6A6A"></div>
<div class="a" style="left:1395px;top:511px;width:2px;height:461px;background:#6A6A6A"></div>
<div class="a" style="left:1908px;top:511px;width:1px;height:462px;background:#DCDCDC"></div>
<div class="a" style="left:1395px;top:972px;width:514px;height:1px;background:#DCDCDC"></div>
<div class="a" style="left:1883px;top:511px;width:25px;height:461px;background:#F8F8F8"></div>
<svg class="a" style="left:1885px;top:524px;" width="21" height="17" viewBox="0 0 21 17"><path d="M1.5 15L10.5 6L19.5 15" fill="none" stroke="#C0C0C0" stroke-width="4"/></svg>
<svg class="a" style="left:1885px;top:942px;" width="21" height="17" viewBox="0 0 21 17"><path d="M1.5 2L10.5 11L19.5 2" fill="none" stroke="#C0C0C0" stroke-width="4"/></svg>
<div class="t" style="left:1782.8px;top:556.8px;font-size:20px;color:#000;letter-spacing:0.9px">ble.</div>
<div class="a" style="left:350px;top:150px;width:1433px;height:764px;background:#0F63CC;box-shadow:0 0 8px rgba(25,35,70,0.38)"></div>
<div class="a" style="left:351px;top:151px;width:1431px;height:762px;background:#F0F0F0"></div>
<div class="a" style="left:351px;top:151px;width:1431px;height:43px;background:#2B579A"></div>
<div class="t" style="left:364.0px;top:170.4px;font-size:16px;color:#FFFFFF;">Save</div>
<svg class="a" style="left:1749px;top:161px;" width="13" height="13" viewBox="0 0 13 13"><path d="M1.6 1.6L11.4 11.4M11.4 1.6L1.6 11.4" stroke="#fff" stroke-width="2"/></svg>
<div class="t" style="left:376.0px;top:216.4px;font-size:16px;color:#333333;">View and manage queued mailboxes to be saved.</div>
<div class="a" style="left:360px;top:256px;width:1413px;height:533px;background:#D9D9D9"></div>
<div class="a" style="left:361px;top:257px;width:1411px;height:531px;background:#FCFCFC"></div>
<div class="a" style="left:362px;top:258px;width:1409px;height:47px;background:#E4E4E4"></div>
<div class="a" style="left:362px;top:305px;width:1409px;height:1px;background:#A8A8A8"></div>
<div class="a" style="left:554px;top:258px;width:1px;height:47px;background:#CDCDCD"></div>
<div class="a" style="left:820px;top:258px;width:1px;height:47px;background:#CDCDCD"></div>
<div class="a" style="left:982px;top:258px;width:1px;height:47px;background:#CDCDCD"></div>
<div class="a" style="left:1180px;top:258px;width:1px;height:47px;background:#CDCDCD"></div>
<div class="a" style="left:1377px;top:258px;width:1px;height:47px;background:#CDCDCD"></div>
<div class="a" style="left:1576px;top:258px;width:1px;height:47px;background:#CDCDCD"></div>
<div class="t" style="left:378.0px;top:275.4px;font-size:16px;color:#333333;">Mailbox Name</div>
<div class="t" style="left:570.5px;top:275.4px;font-size:16px;color:#333333;">Destination Mailbox</div>
<div class="t" style="left:835.0px;top:275.4px;font-size:16px;color:#333333;">Status</div>
<div class="t" style="left:998.0px;top:275.4px;font-size:16px;color:#333333;">Recovering Folder</div>
<div class="t" style="left:1195.5px;top:275.4px;font-size:16px;color:#333333;">Total Items Processed</div>
<div class="t" style="left:1393.0px;top:275.4px;font-size:16px;color:#333333;">Progress</div>
<div class="t" style="left:1592.0px;top:275.4px;font-size:16px;color:#333333;">Action</div>
<div class="t" style="left:375.0px;top:321.4px;font-size:16px;color:#333333;">Destiny roar</div>
<div class="t" style="left:567.0px;top:321.4px;font-size:16px;color:#333333;">corrupted2@thestellarinfo.com</div>
<div class="t" style="left:995.0px;top:321.4px;font-size:16px;color:#333333;">Inbox</div>
<div class="t" style="left:1192.5px;top:321.4px;font-size:16px;color:#333333;">0</div>
<div class="t" style="left:1379.5px;top:321.4px;font-size:16px;color:#333333;">49%</div>
<div class="t" style="left:832.0px;top:321.7px;font-size:15.6px;color:#1C7ED6;">Processing...</div>
<div class="a" style="left:1423px;top:310px;width:149px;height:36px;background:#555555"></div>
<div class="a" style="left:1424px;top:311px;width:147px;height:34px;background:#FFFFFF"></div>
<div class="a" style="left:1425px;top:312px;width:70px;height:31px;background:#2B579A"></div>
<div class="a" style="left:1594px;top:318px;width:68px;height:20px;background:#DCDCDC"></div>
<div class="t" style="left:1598.0px;top:321.4px;font-size:16px;color:#FFFFFF;">Remove</div>
<div class="a" style="left:362px;top:761px;width:1409px;height:26px;background:#E6E6E6"></div>
<div class="a" style="left:362px;top:761px;width:27px;height:26px;background:#B4B4B4"></div>
<div class="a" style="left:363px;top:762px;width:25px;height:24px;background:#FCFCFC"></div>
<div class="a" style="left:388px;top:761px;width:1337px;height:26px;background:#B4B4B4"></div>
<div class="a" style="left:389px;top:762px;width:1335px;height:24px;background:#FEFEFE"></div>
<div class="a" style="left:1745px;top:761px;width:26px;height:26px;background:#B4B4B4"></div>
<div class="a" style="left:1746px;top:762px;width:24px;height:24px;background:#FCFCFC"></div>
<svg class="a" style="left:1755px;top:768px;" width="8" height="13" viewBox="0 0 8 13"><path d="M0 0L7.5 6.5L0 13Z" fill="#7A7A7A"/></svg>
<svg class="a" style="left:372px;top:768px;" width="8" height="13" viewBox="0 0 8 13"><path d="M7.5 0L0 6.5L7.5 13Z" fill="#7A7A7A"/></svg>
</body></html>
